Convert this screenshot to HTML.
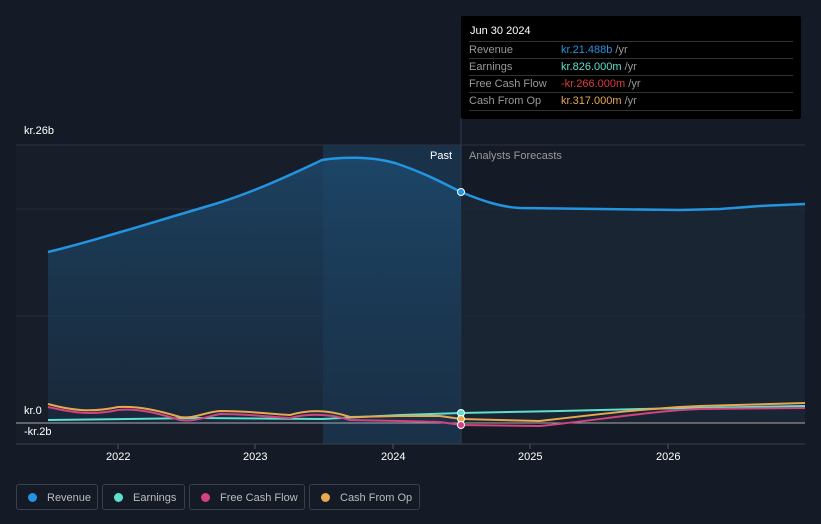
<!DOCTYPE html>
<html><head><style>
body{margin:0;width:821px;height:524px;background:#151b26;font-family:"Liberation Sans",sans-serif;overflow:hidden;position:relative}
.t{position:absolute;color:#fff;font-size:11px}
.tip{position:absolute;left:461px;top:16px;width:340px;height:103px;background:#000;border-radius:2px}
.tip .h{position:absolute;left:9px;top:9px;color:#fff;font-size:11px}
.row{position:absolute;left:8px;width:324px;border-top:1px solid #333;height:17px;font-size:11px;color:#999;line-height:17px}
.row span{position:absolute;left:92px}
.leg{position:absolute;top:484px;height:26px;border:1px solid #3a3f4a;border-radius:3px;color:#bbb;font-size:11px;line-height:26px;box-sizing:border-box}
.leg i{display:inline-block;width:9px;height:9px;border-radius:50%;margin:0 10px 0 11px;vertical-align:-1px}
</style></head><body>
<svg width="821" height="524" style="position:absolute;left:0;top:0">
<defs><linearGradient id="g" x1="0" y1="0" x2="0" y2="1"><stop offset="0" stop-color="#1d4a6e" stop-opacity=".8"/><stop offset="1" stop-color="#1a2f45" stop-opacity=".6"/></linearGradient></defs>
<rect x="16" y="145" width="445" height="299" fill="#181e29"/>
<rect x="323" y="145" width="138" height="299" fill="#19324a"/>
<line x1="16" y1="145" x2="805" y2="145" stroke="#2c333e"/>
<line x1="16" y1="209" x2="805" y2="209" stroke="#262d38"/>
<line x1="16" y1="316" x2="805" y2="316" stroke="#262d38"/>
<line x1="461" y1="118" x2="461" y2="444" stroke="#2c3e52"/>
<path d="M48,252 C90,242 140,226 215,204 C250,193 280,180 322,160 C340,157 370,156 395,163 C425,173 445,184 461,192 L461,423 L48,423Z" fill="url(#g)"/>
<path d="M461,192 C480,200 500,207 520,208 L600,209 L680,210 L720,209 L760,206 L805,204 L805,423 L461,423Z" fill="#1a2837" opacity=".8"/>
<path d="M48,252 C90,242 140,226 215,204 C250,193 280,180 322,160 C340,157 370,156 395,163 C425,173 445,184 461,192 C480,200 500,207 520,208 L600,209 L680,210 L720,209 L760,206 L805,204" fill="none" stroke="#2394e0" stroke-width="2.5"/>
<line x1="16" y1="423" x2="805" y2="423" stroke="#aaa"/>
<line x1="16" y1="444" x2="805" y2="444" stroke="#39404a"/>
<path d="M48,420 L200,418 L323,419 L400,415 L461,413 L560,411 L640,409 L805,406" fill="none" stroke="#5ee0cf" stroke-width="2"/>
<path d="M48,407 C70,412 90,416 118,410 C140,408 160,414 180,420 C195,422 205,417 220,414 C250,414 270,417 290,418 C310,413 330,414 350,420 L400,421 L440,422 L461,425 L540,426 C600,420 650,411 700,409 L805,408" fill="none" stroke="#d2437f" stroke-width="2"/>
<path d="M48,404 C70,410 90,413 118,407 C140,406 160,411 180,417 C195,419 205,412 220,411 C250,411 270,414 290,415 C310,409 330,410 350,417 L400,416 L440,416 L461,419 L540,421 C600,414 650,408 700,406 L805,403" fill="none" stroke="#e8a850" stroke-width="2"/>
<circle cx="461" cy="192" r="3.5" fill="#2394e0" stroke="#fff"/>
<circle cx="461" cy="413" r="3.5" fill="#5ee0cf" stroke="#fff"/>
<circle cx="461" cy="419" r="3.5" fill="#e8a850" stroke="#fff"/>
<circle cx="461" cy="425" r="3.5" fill="#d2437f" stroke="#fff"/>
<line x1="118" y1="444" x2="118" y2="449" stroke="#555"/><line x1="255" y1="444" x2="255" y2="449" stroke="#555"/><line x1="393" y1="444" x2="393" y2="449" stroke="#555"/><line x1="530" y1="444" x2="530" y2="449" stroke="#555"/><line x1="668" y1="444" x2="668" y2="449" stroke="#555"/>
</svg>
<div class="t" style="left:24px;top:125px">kr.26b</div>
<div class="t" style="left:24px;top:405px">kr.0</div>
<div class="t" style="left:24px;top:426px">-kr.2b</div>
<div class="t" style="left:430px;top:150px">Past</div>
<div class="t" style="left:469px;top:150px;color:#999">Analysts Forecasts</div>
<div class="t" style="left:106px;top:451px">2022</div>
<div class="t" style="left:243px;top:451px">2023</div>
<div class="t" style="left:381px;top:451px">2024</div>
<div class="t" style="left:518px;top:451px">2025</div>
<div class="t" style="left:656px;top:451px">2026</div>
<div class="tip"><div class="h">Jun 30 2024</div>
<div class="row" style="top:25px">Revenue<span><b style="font-weight:normal;color:#2394e0">kr.21.488b</b> /yr</span></div>
<div class="row" style="top:42px">Earnings<span><b style="font-weight:normal;color:#5ee0cf">kr.826.000m</b> /yr</span></div>
<div class="row" style="top:59px">Free Cash Flow<span><b style="font-weight:normal;color:#e03a3a">-kr.266.000m</b> /yr</span></div>
<div class="row" style="top:76px">Cash From Op<span><b style="font-weight:normal;color:#e8a850">kr.317.000m</b> /yr</span></div>
<div class="row" style="top:94px;height:0"></div>
</div>
<div class="leg" style="left:16px;width:82px"><i style="background:#2394e0"></i>Revenue</div>
<div class="leg" style="left:102px;width:83px"><i style="background:#5ee0cf"></i>Earnings</div>
<div class="leg" style="left:189px;width:116px"><i style="background:#d2437f"></i>Free Cash Flow</div>
<div class="leg" style="left:309px;width:111px"><i style="background:#e8a850"></i>Cash From Op</div>
</body></html>
